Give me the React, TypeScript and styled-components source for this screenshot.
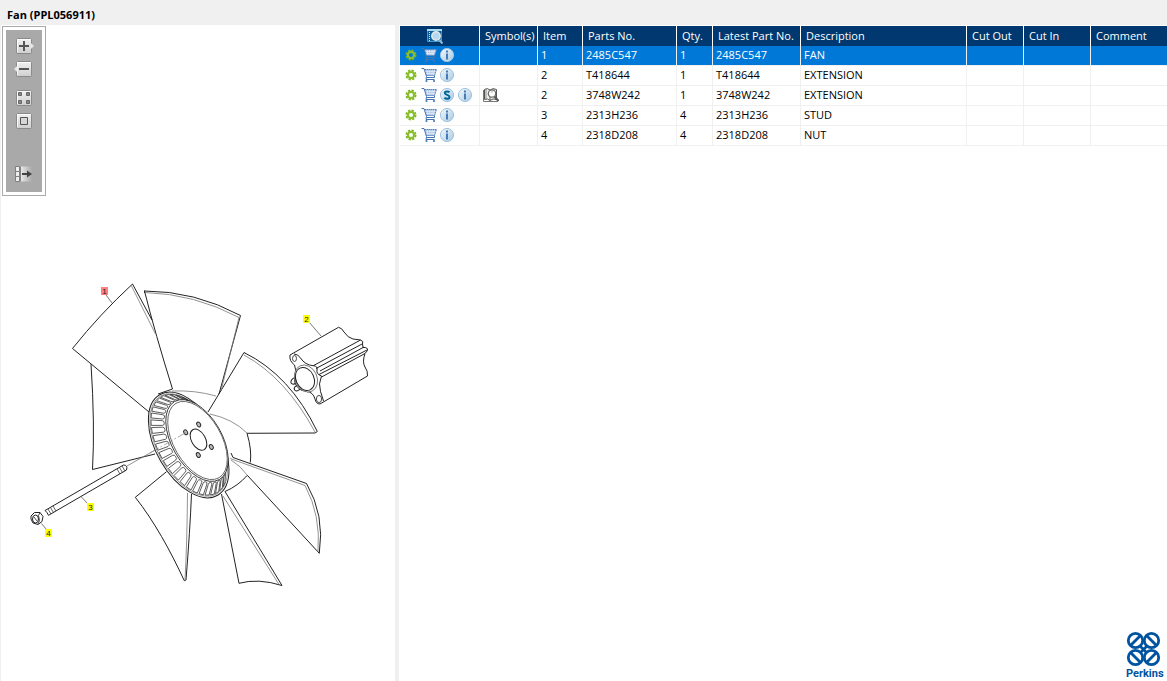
import React from "react";
import styled, { createGlobalStyle } from "styled-components";

const GlobalStyle = createGlobalStyle`
  *, *::before, *::after { box-sizing: border-box; }
  body {
    margin: 0;
    background: #f0f0f0;
    color: #000;
    font-family: "Open Sans", "Noto Sans", sans-serif;
    font-size: 11px;
    line-height: 16px;
  }
`;

const Page = styled.div`
  min-height: 100vh;
  display: flex;
  flex-direction: column;
`;

const TitleBar = styled.h1`
  margin: 0;
  padding: 7px 7px 2px;
  font-size: 11px;
  line-height: 16px;
  font-weight: 700;
`;

const Content = styled.main`
  flex: 1;
  display: grid;
  grid-template-columns: 394px minmax(0, 1fr);
  column-gap: 4px;
  padding-left: 1px;
`;

const Viewer = styled.section`
  display: grid;
  background: #fff;
  & > * { grid-area: 1 / 1; }
`;

const Toolbar = styled.div`
  z-index: 1;
  justify-self: start;
  align-self: start;
  display: flex;
  flex-direction: column;
  align-items: center;
  width: 44px;
  height: 170px;
  margin: 1px;
  padding-top: 11px;
  border: 1px solid #a9a9a9;
  background: #a9a9a9;
  box-shadow: inset 0 0 0 3px #fff;
`;

const ToolButton = styled.button<{ $gap: number }>`
  display: block;
  width: 20px;
  height: 16px;
  margin: 0 0 ${(p) => p.$gap}px;
  padding: 0;
  border: 0;
  background: none;
`;

const Drawing = styled.svg`
  display: block;
  width: 394px;
  height: 656px;
`;

const PartsPanel = styled.section`
  display: flex;
  flex-direction: column;
  justify-content: space-between;
  padding: 1px 0 0 1px;
  background: #fff;
`;

const PartsTable = styled.table`
  width: 100%;
  table-layout: fixed;
  border-collapse: separate;
  border-spacing: 0;
`;

const HeadCell = styled.th`
  height: 20px;
  padding: 0 0 0 5px;
  border-right: 1px solid #fff;
  background: #00386f;
  color: #fff;
  font-weight: 400;
  text-align: left;
  white-space: nowrap;
  &:last-child { border-right: 0; }
`;

const Row = styled.tr<{ $selected?: boolean }>`
  background: ${(p) => (p.$selected ? "#0078d7" : "#fff")};
  color: ${(p) => (p.$selected ? "#fff" : "#000")};
`;

const Cell = styled.td`
  height: 20px;
  padding: 1px 0 2px 3px;
  border-right: 1px solid #f0f0f0;
  border-bottom: 1px solid #f0f0f0;
  white-space: nowrap;
  &:last-child { border-right: 0; }
`;

const Actions = styled.div`
  display: flex;
  align-items: center;
  gap: 2px;
`;

const IconButton = styled.button`
  display: block;
  width: 16px;
  height: 16px;
  padding: 0;
  border: 0;
  background: none;
`;

const HeadIcon = styled.div`
  display: flex;
  justify-content: center;
  padding-right: 15px;
`;

const Logo = styled.svg`
  align-self: flex-end;
  display: block;
  width: 42px;
  height: 50px;
`;

const Plate = ({ tab }: { tab?: "left" | "right" }) => (
  <>
    <defs>
      <linearGradient id="plate" x1="0" y1="0" x2="0" y2="1">
        <stop offset="0" stopColor="#f2f2f2" />
        <stop offset="1" stopColor="#cfcfcf" />
      </linearGradient>
    </defs>
    <rect x="2.5" y=".5" width="15" height="15" rx="1" fill="url(#plate)" stroke="#8a8a8a" />
    <path d="M3.500 14V1.500H16.500" fill="none" stroke="#fff" strokeWidth=".8" />
    {tab === "right" && <path d="M17 5.500L19.500 8L17 10.500z" fill="#e8e8e8" stroke="#e8e8e8" strokeWidth=".8" />}
    {tab === "left" && <path d="M3 5.500L.5 8L3 10.500z" fill="#e8e8e8" stroke="#e8e8e8" strokeWidth=".8" />}
  </>
);

const tools = [
  { label: "Zoom in", gap: 7, art: <><Plate tab="right" /><path d="M5 8h10M10 3v10" stroke="#555" strokeWidth="2" /></> },
  { label: "Zoom out", gap: 13, art: <><Plate tab="left" /><path d="M5 8h10" stroke="#555" strokeWidth="2" /></> },
  {
    label: "Fit to window", gap: 7,
    art: <><Plate /><path d="M4.500 2.500h3v3h-3zM12.500 2.500h3v3h-3zM4.500 10.500h3v3h-3zM12.500 10.500h3v3h-3z" fill="#888" stroke="#666" /></>,
  },
  { label: "Actual size", gap: 37, art: <><Plate /><path d="M6.500 4.500h7v7h-7z" fill="#d6d6d6" stroke="#555" /></> },
  {
    label: "Toggle list", gap: 0,
    art: (
      <>
        <defs>
          <linearGradient id="fade"><stop offset="0" stopColor="#eee" /><stop offset="1" stopColor="#a9a9a9" /></linearGradient>
        </defs>
        <path d="M6 .5h12v15H6z" fill="url(#fade)" />
        <path d="M1.500 .5h4v5h-4zM1.500 5.500h4v5h-4zM1.500 10.500h4v5h-4zM6.500 .5v15" fill="#eee" stroke="#808080" />
        <path d="M8 8h6" stroke="#444" strokeWidth="2" /><path d="M13 4.500L18 8l-5 3.500z" fill="#444" />
      </>
    ),
  },
];

const GearIcon = () => (
  <svg width="16" height="16" viewBox="0 0 16 16" aria-hidden="true">
    <circle cx="8" cy="8" r="4.600" fill="none" stroke="#7ab51d" strokeWidth="1.800" strokeDasharray="2.200 1.413" />
    <circle cx="8" cy="8" r="3.100" fill="none" stroke="#8abf2e" strokeWidth="2.200" />
  </svg>
);

const CartIcon = () => (
  <svg width="16" height="16" viewBox="0 0 16 16" fill="none" aria-hidden="true">
    <path d="M3.500 2.500H15.500L13.500 8.500H5z" fill="#a9c1e2" />
    <path d="M4 4.500H15M4.500 6.500H14.300M6 2.500L7 8.500M8.500 2.500L9 8.500M11 2.500V8.500M13.500 2.500L12 8.500" stroke="#e6eef8" strokeWidth=".7" />
    <path d="M3.500 2.500H15.500L13.500 8.500H5" stroke="#5a86c0" strokeDasharray="1.500 .5" />
    <path d="M.5 1.500H3L5.500 9.500L5 12.500H13.500M5.500 10.500H13.500V8.500" stroke="#4676b2" />
    <circle cx="5.500" cy="14" r="1.100" fill="#4676b2" /><circle cx="13" cy="14" r="1.100" fill="#4676b2" />
  </svg>
);

const Disc = ({ children }: { children: React.ReactNode }) => (
  <svg width="16" height="16" viewBox="0 0 16 16" aria-hidden="true">
    <defs>
      <linearGradient id="disc" x1="0" y1="0" x2="1" y2="1">
        <stop offset="0" stopColor="#f4f9fc" /><stop offset="1" stopColor="#a6cae4" />
      </linearGradient>
    </defs>
    <circle cx="8" cy="8" r="6.600" fill="url(#disc)" stroke="#a3c4de" />
    {children}
  </svg>
);

const InfoIcon = () => (
  <Disc>
    <path d="M7 3.500h2v2H7zM7 6.500h2v6H7z" fill="#4a7ab5" />
  </Disc>
);

const SupersedeIcon = () => (
  <Disc>
    <path d="M10.500 5.300C9 4 5.800 4 5.800 6c0 2.200 4.700 1.500 4.700 3.900 0 2.200-3.500 2.200-5.100.8" fill="none" stroke="#00659b" strokeWidth="2" />
  </Disc>
);

const BookIcon = () => (
  <svg width="16" height="16" viewBox="0 0 16 16" fill="none" aria-label="Illustration available">
    <path d="M.5 3v11.500H14.500V12" stroke="#777" />
    <path d="M1.500 2.500Q4.500 .5 7 3v10.500Q4.500 11 1.500 12.500zM7 3Q10 .5 13.500 2.500v10Q10 11 7 13.500" fill="#f3f0ea" stroke="#555" />
    <path d="M3 1.500V12" stroke="#888" />
    <circle cx="9" cy="6.500" r="3.700" fill="#fff" stroke="#666" strokeWidth="1.200" />
    <path d="M8 5.500a2 2 0 0 1 2-.8" stroke="#aaa" /><path d="M11.500 9.500L15.500 14" stroke="#555" strokeWidth="2" />
  </svg>
);

const PreviewIcon = () => (
  <svg width="16" height="16" viewBox="0 0 16 16" fill="none" aria-hidden="true">
    <path d="M.5 1.500h14v12H.5z" fill="#0f5e9c" stroke="#3d9bd4" />
    <path d="M0 1h15v2H0z" fill="#a8dcf2" />
    <path d="M2.500 4v9" stroke="#cfe9f6" strokeDasharray="1 1" />
    <circle cx="9" cy="8" r="4.200" fill="#b5d9ef" stroke="#e4e8ea" strokeWidth="1.500" />
    <path d="M12 11.500L15.500 15.500" stroke="#8fb4d4" strokeWidth="2.200" />
  </svg>
);

const columns = [
  { name: "Symbol(s)", width: 58 },
  { name: "Item", width: 45 },
  { name: "Parts No.", width: 94 },
  { name: "Qty.", width: 36 },
  { name: "Latest Part No.", width: 88 },
  { name: "Description", width: 166 },
  { name: "Cut Out", width: 57 },
  { name: "Cut In", width: 67 },
  { name: "Comment", width: undefined },
];

const parts = [
  { item: 1, no: "2485C547", qty: 1, description: "FAN", selected: true },
  { item: 2, no: "T418644", qty: 1, description: "EXTENSION" },
  { item: 2, no: "3748W242", qty: 1, description: "EXTENSION", superseded: true, book: true },
  { item: 3, no: "2313H236", qty: 4, description: "STUD" },
  { item: 4, no: "2318D208", qty: 4, description: "NUT" },
];

/* A point on an ellipse whose long axis is turned 60 degrees. */
const onRim = (cx: number, cy: number, rx: number, ry: number, deg: number) => {
  const t = (deg * Math.PI) / 180;
  const a = rx * Math.cos(t);
  const b = ry * Math.sin(t);
  return [cx + a * 0.5 - b * 0.866, cy + a * 0.866 + b * 0.5];
};

const slotPath = (deg: number) => {
  const p = (k: number, d: number) => {
    const o = onRim(188.7, 445, 56, 30.5, d);
    const i = onRim(196, 441, 45.5, 25.5, d);
    return `${(o[0] + (i[0] - o[0]) * k).toFixed(1)} ${(o[1] + (i[1] - o[1]) * k).toFixed(1)}`;
  };
  const w = 3.5;
  return `M${p(0.05, deg - w)}L${p(0.85, deg - w)}Q${p(1, deg - w)} ${p(1, deg)}Q${p(1, deg + w)} ${p(0.85, deg + w)}L${p(0.05, deg + w)}z`;
};

const slots = Array.from({ length: 26 }, (_, i) => slotPath(-20 + i * 9.6)).join("");

const callouts = [
  { n: 1, x: 101, y: 287, color: "#ff8080" },
  { n: 2, x: 303, y: 315, color: "#ffff00" },
  { n: 3, x: 87, y: 503, color: "#ffff00" },
  { n: 4, x: 45, y: 529, color: "#ffff00" },
];

const FanDrawing = () => (
  <Drawing viewBox="1 25 394 656" fill="none" stroke="#222" strokeWidth="1" strokeLinejoin="round" role="img" aria-label="Exploded view of fan">
    <g>
      <path d="M149 412L72.500 348.500Q100 314 132.500 284L152 320M144.500 291Q155 333 172.500 389L158 394" />
      <path d="M144.500 291Q195 291 240.500 315.500L219 394M144.500 293L144.500 290.500" />
      <path d="M91 364Q95 425 92.500 469.500L155 454" />
      <path d="M208 412L244 352.500Q290 375 317.300 431.500L315 433L247 433.300Q252 450 250.300 462.500" />
      <path d="M231 453L233 457.500L306.500 483.500Q325 515 319.300 553.300L247.300 475.300Q238 486 225 491.500L282 585.500Q258 578 239 583.300L221.500 494" />
      <path d="M166.500 471.700L135.300 497.300C154 521 170 550 184.300 580.700L186 580Q190 530 191.500 494" />
    </g>
    <g stroke="#777" strokeWidth=".8">
      <path d="M131.500 286L155.500 334M145 292.500Q195 294 239 317.500L221 391M172 391Q195 390 216 396" />
      <path d="M244 355Q286 378 315 432M210 414Q233 419 247 433M230 458.500L305 485.500Q321 515 318 552M231 460Q241 466 247 475" />
      <path d="M223 496L279 584.500M187.500 493Q187 545 185 580M127 466L186 432.500" />
    </g>
    <g transform="rotate(60 188.700 445)">
      <ellipse cx="188.700" cy="445" rx="58" ry="32.300" fill="#fff" />
      <ellipse cx="188.700" cy="445" rx="56.500" ry="30.800" stroke="#777" strokeWidth=".7" />
    </g>
    <path d={slots} stroke="#333" strokeWidth=".8" />
    <g fill="#fff">
      <ellipse cx="197" cy="440.500" rx="45" ry="25" transform="rotate(60 197 440.500)" strokeWidth=".8" />
      <ellipse cx="197.500" cy="440.500" rx="43" ry="23.800" transform="rotate(60 197.500 440.500)" stroke="#555" strokeWidth=".8" />
      <ellipse cx="198.500" cy="439.700" rx="11.500" ry="7" transform="rotate(60 198.500 439.700)" />
    </g>
    {[[198.7, 424.5], [185.7, 432.3], [211.3, 447], [198.3, 455]].map(([x, y]) => (
      <g key={x + y} strokeWidth=".9">
        <ellipse cx={x} cy={y} rx="2.600" ry="1.800" transform={`rotate(60 ${x} ${y})`} fill="#bbb" />
      </g>
    ))}
    <path d="M150 453L186 432.500" stroke="#888" strokeWidth=".7" strokeDasharray="10 2 2 2" />

    <g>
      <path d="M45 510.500L123.500 465Q128 465 126.500 470L48.500 515.300Q47 512 45 510.500z" fill="#fff" />
      <path d="M48 509l3 5M50.500 507.500l3 5M53 506l3 5M117 469l3 5M119.500 467.500l3 5M122 466l3 5" strokeWidth=".7" />
      <path d="M31 516L34.500 512.500L40 512.500L43 516.500L42 521.500L38 524.500L33 523L31 519z" fill="#fff" />
      <ellipse cx="35.500" cy="519" rx="3" ry="4" /><path d="M34 517l3 4M40 512.500l-1.500 3 1 5L38 524" strokeWidth=".8" />
    </g>

    <g fill="#fff">
      <ellipse cx="294" cy="381" rx="3.500" ry="2.500" transform="rotate(-50 294 381)" />
      <ellipse cx="297.500" cy="388" rx="3.500" ry="2.500" transform="rotate(-30 297.500 388)" />
      <path d="M290 355L338.500 327.300Q342 328 344 332Q348 338 353 339L360.500 340Q364 341 362.500 344L363 347.500Q368 347 367.500 350.500L365 353.500Q362 362 365 367Q368 371 367.500 376L320 404Q316 404 315 399Q313 392 307 391.500L301 390Q293 385 295 377Q297 371 294.500 365Q289 361 290 355z" />
      <path d="M294 354Q298 354 300.500 358Q305 365 313.300 365.700L360.500 340M316 368.500L362 344M320 371L364 347M319 374.500L367 350M321.500 377L365 353.500M313.300 365.700Q318 366 317 370Q316 374 321.500 376Q318 384 320.500 391.500Q322 396 323.500 401" fill="none" />
      <ellipse cx="306" cy="378.500" rx="14" ry="11" transform="rotate(65 306 378.500)" stroke="#666" strokeWidth=".8" />
      <ellipse cx="305" cy="379" rx="12" ry="9" transform="rotate(65 305 379)" />
      <ellipse cx="294.500" cy="358.500" rx="2" ry="3" strokeWidth=".8" />
      <ellipse cx="319" cy="399" rx="2.600" ry="3.600" strokeWidth=".8" />
    </g>

    <path d="M106 295L112 303M309 322L321 336M81 496.500L88 504M41.500 523.500L47 530" stroke="#555" strokeWidth=".8" />
    {callouts.map((c) => (
      <g key={c.n} stroke="none">
        <rect x={c.x} y={c.y} width="7" height="8" fill={c.color} />
        <text x={c.x + 3.5} y={c.y + 7} textAnchor="middle" fontFamily="Liberation Sans, sans-serif" fontSize="8" fill="#222">{c.n}</text>
      </g>
    ))}
  </Drawing>
);

const PerkinsLogo = () => (
  <Logo viewBox="0 0 42 50" role="img" aria-label="Perkins">
    <g fill="none" stroke="#00539f" strokeWidth="2.800">
      {[[10.5, 9.5, 1], [26.5, 9.5, -1], [10.5, 26.5, -1], [26.5, 26.5, 1]].map(([x, y, d]) => (
        <g key={`${x}-${y}`}>
          <circle cx={x} cy={y} r="7.200" />
          <path d={`M${x - 5} ${y + 5 * d}L${x + 5} ${y - 5 * d}`} />
        </g>
      ))}
      <path d="M15.500 15.500L21.500 21.500M21.500 15.500L15.500 21.500" />
    </g>
    <text x="1" y="46" fontFamily="Roboto, sans-serif" fontSize="11" fontWeight="700" fill="#00539f">Perkins</text>
  </Logo>
);

export default function App() {
  return (
    <>
      <GlobalStyle />
      <Page>
        <TitleBar>Fan (PPL056911)</TitleBar>
        <Content>
          <Viewer>
            <Toolbar role="toolbar" aria-label="Drawing tools">
              {tools.map((t) => (
                <ToolButton key={t.label} $gap={t.gap} aria-label={t.label}>
                  <svg width="20" height="16" viewBox="0 0 20 16" display="block">{t.art}</svg>
                </ToolButton>
              ))}
            </Toolbar>
            <FanDrawing />
          </Viewer>
          <PartsPanel>
            <PartsTable>
              <colgroup>
                <col width={80} />
                {columns.map((c) => <col key={c.name} width={c.width} />)}
              </colgroup>
              <thead>
                <tr>
                  <HeadCell aria-label="Actions"><HeadIcon><PreviewIcon /></HeadIcon></HeadCell>
                  {columns.map((c) => <HeadCell key={c.name} scope="col">{c.name}</HeadCell>)}
                </tr>
              </thead>
              <tbody>
                {parts.map((p) => (
                  <Row key={p.no} $selected={p.selected}>
                    <Cell>
                      <Actions>
                        <IconButton aria-label="Options"><GearIcon /></IconButton>
                        <IconButton aria-label="Add to cart"><CartIcon /></IconButton>
                        {p.superseded && <IconButton aria-label="Supersession"><SupersedeIcon /></IconButton>}
                        <IconButton aria-label="Information"><InfoIcon /></IconButton>
                      </Actions>
                    </Cell>
                    <Cell>{p.book && <Actions><BookIcon /></Actions>}</Cell>
                    <Cell>{p.item}</Cell>
                    <Cell>{p.no}</Cell>
                    <Cell>{p.qty}</Cell>
                    <Cell>{p.no}</Cell>
                    <Cell>{p.description}</Cell>
                    <Cell />
                    <Cell />
                    <Cell />
                  </Row>
                ))}
              </tbody>
            </PartsTable>
            <PerkinsLogo />
          </PartsPanel>
        </Content>
      </Page>
    </>
  );
}
